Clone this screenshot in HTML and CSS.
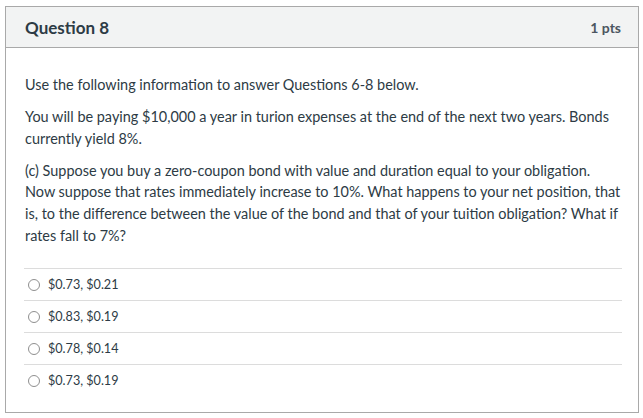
FILE: index.html
```html
<!DOCTYPE html>
<html>
<head>
<meta charset="utf-8">
<link rel="stylesheet" href="styles.css">
</head>
<body>
<div class="question">
  <div class="q-header">
    <span class="q-title">Question 8</span>
    <span class="q-pts">1 pts</span>
  </div>
  <div class="q-body">
    <p class="q-text">Use the following information to answer Questions 6-8 below.</p>
    <p class="q-text">You will be paying $10,000 a year in turion expenses at the end of the next two years. Bonds currently yield 8%.</p>
    <p class="q-text">(c) Suppose you buy a zero-coupon bond with value and duration equal to your obligation.<br>Now suppose that rates immediately increase to 10%. What happens to your net position, that<br>is, to the difference between the value of the bond and that of your tuition obligation? What if<br>rates fall to 7%?</p>
    <div class="answers">
      <label class="answer"><span class="radio"></span><span>$0.73, $0.21</span></label>
      <label class="answer"><span class="radio"></span><span>$0.83, $0.19</span></label>
      <label class="answer"><span class="radio"></span><span>$0.78, $0.14</span></label>
      <label class="answer"><span class="radio"></span><span>$0.73, $0.19</span></label>
    </div>
  </div>
</div>
</body>
</html>
```
FILE: styles.css
```css
html, body {
  margin: 0;
  padding: 0;
  background: #fff;
}
body {
  padding: 6px 3px 0 5px;
  font-family: Lato, "Liberation Sans", sans-serif;
  color: #2d3b45;
}
.question {
  width: 634px;
  border: 1px solid #a9a9a9;
  box-sizing: border-box;
  height: 407px;
}
.q-header {
  display: flex;
  justify-content: space-between;
  align-items: center;
  height: 40px;
  padding: 0 17px 0 19px;
  background: #f2f3f3;
  border-bottom: 1px solid #a9a9a9;
}
.q-title {
  font-size: 17px;
  font-weight: 700;
  color: #2d3b45;
}
.q-pts {
  font-size: 14px;
  font-weight: 700;
  color: #4b5660;
}
.q-body {
  padding: 26px 16px 0 19px;
}
.q-text {
  margin: 0 0 10.5px;
  font-size: 14.45px;
  line-height: 21.6px;
  color: #2d3b45;
}
.answers {
  margin-top: 22px;
  margin-left: -1px;
  border-top: 1px solid #dcdcdc;
}
.answer {
  display: flex;
  align-items: center;
  height: 31px;
  border-bottom: 1px solid #dcdcdc;
  font-size: 12.6px;
  color: #2d3b45;
}
.answer:last-child {
  border-bottom: none;
}
.radio {
  width: 12px;
  height: 12px;
  border: 1px solid #8f8f8f;
  border-radius: 50%;
  margin: 0 8px 0 4px;
  box-sizing: border-box;
  flex: none;
}
```
